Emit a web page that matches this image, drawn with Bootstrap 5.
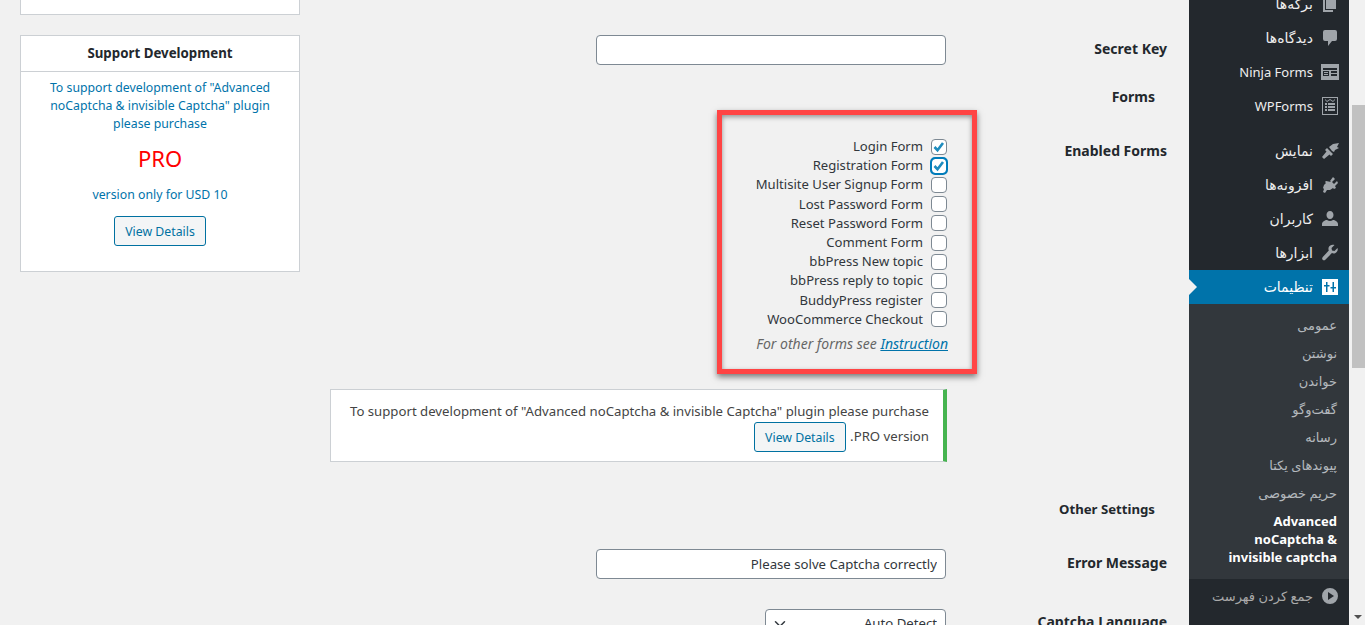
<!DOCTYPE html>
<html lang="fa" dir="rtl">
<head>
    <meta charset="UTF-8">
    <title>Advanced noCaptcha &amp; invisible captcha</title>
    <link href="https://cdn.jsdelivr.net/npm/bootstrap@5.3.3/dist/css/bootstrap.min.css" rel="stylesheet">
    <style>
        body {
            height: 100vh;
            overflow: hidden;
            background: #f1f1f1;
            font-family: "Noto Sans", "DejaVu Sans", sans-serif;
            font-size: 13px;
            color: #444;
        }

        /* fake browser scrollbar */
        .page-scroll { width: 14px; height: 625px; margin-left: 2px; position: relative; }
        .page-scroll-thumb { width: 13px; height: 263px; margin-top: 105px; background: #c1c1c1; }
        .page-scroll-arrow {
            position: absolute; bottom: 6px; right: 3px; width: 0;
            border-left: 4px solid transparent; border-right: 4px solid transparent; border-top: 4px solid #505050;
        }

        /* admin menu */
        .wp-menu { width: 160px; margin-top: -13px; background: #23282d; color: #eee; flex-shrink: 0; height: 640px; }
        .menu-row { height: 34px; padding-right: 9px; gap: 7px; line-height: 1; font-size: 14px; }
        .menu-row .latin-name { font-size: 13px; }
        .menu-row svg { width: 20px; height: 20px; fill: #a0a5aa; flex-shrink: 0; }
        .menu-gap { height: 11px; }
        .menu-row.active { background: #0073aa; color: #fff; position: relative; }
        .menu-row.active svg { fill: #fff; }
        .menu-row.active::after {
            content: ""; position: absolute; left: 0; top: 9px;
            border: 8px solid transparent; border-left-color: #f1f1f1; border-right: 0;
        }
        .sub-menu { background: #32373c; padding: 7px 12px 13px 18px; font-size: 13px; color: #b4b9be; }
        .sub-menu div { height: 28px; line-height: 28px; }
        .sub-menu .current { height: auto; line-height: 18px; color: #fff; font-weight: 700; margin-top: 5px; }
        .menu-collapse { color: #aaa; font-size: 13px; }

        /* left boxes */
        .side-col { width: 280px; margin-left: 20px; margin-right: 30px; flex-shrink: 0; }
        .side-stub { height: 15px; background: #fff; border: 1px solid #ccd0d4; border-top: 0; margin-bottom: 20px; }
        .side-box { background: #fff; border: 1px solid #ccd0d4; height: 237px; color: #0073aa; font-size: 12.3px; line-height: 18px; }
        .side-title { height: 36px; line-height: 35px; border-bottom: 1px solid #ccd0d4; font-weight: 700; color: #23282d; font-size: 13.3px; }
        .side-text { padding: 7px 20px 0; }
        .pro-word { color: #f00; font-size: 22px; line-height: 32px; margin: 9px 0 12px; }
        .wp-btn {
            background: #f3f5f6; border: 1px solid #0071a1; color: #0071a1; border-radius: 3px;
            font-size: 12.3px; line-height: 29px; height: 30px; padding: 0 10px;
        }
        .wp-btn:hover { background: #f1f1f1; color: #016087; border-color: #016087; }
        .side-btn { margin-top: 12px; }

        /* settings table */
        .form-area { width: 837px; margin-right: 22px; flex-shrink: 0; padding-top: 35px; }
        .label-cell { width: 190px; flex-shrink: 0; font-weight: 700; font-size: 14px; color: #23282d; text-align: right; padding-bottom: 3px; }
        .label-top { padding-top: 30px; }
        .label-lang { padding-top: 2px; }
        .field-cell { padding-right: 31px; }
        .key-row { height: 30px; }
        .field-cell .form-control {
            width: 350px; height: 30px; border: 1px solid #7e8993; border-radius: 4px;
            padding: 0 8px; font-size: 13.2px; color: #32373c; box-shadow: none;
        }
        .heading-row { font-weight: 700; font-size: 14px; color: #23282d; padding-right: 12px; margin-top: 21px; height: 24px; }
        .heading-other { margin-top: 36px; padding-top: 2px; height: 30px; font-size: 13.2px; }
        .error-row { margin-top: 21px; }
        .lang-row { margin-top: 30px; }
        .red-box {
            width: 260px; margin-right: -31px; padding: 22px 25px 0 22px; height: 264px;
            border: 5px solid #ff4444;
            box-shadow: 0 3px 6px rgba(0, 0, 0, .5), inset 0 2px 5px rgba(0, 0, 0, .4);
            color: #32373c;
            font-size: 13.1px;
        }
        .form-line { height: 19.2px; line-height: 21px; gap: 8px; white-space: nowrap; }
        .form-line .form-check-input {
            width: 16px; height: 16px; margin: 0; border: 1px solid #7e8993; border-radius: 4px; float: none; flex-shrink: 0;
        }
        .form-line .form-check-input:checked {
            background-color: #fff;
            background-size: 16px;
            background-image: url("data:image/svg+xml,%3Csvg xmlns='http://www.w3.org/2000/svg' viewBox='0 0 16 16'%3E%3Cpath fill='none' stroke='%231e8cbe' stroke-width='2.6' d='M3.500 8l3 3.200 5.500-7.200'/%3E%3C/svg%3E");
        }
        .form-line .form-check-input.is-focus { outline: 2px solid #007cba; outline-offset: -1px; border-color: #007cba; }
        .note-line { font-style: italic; font-size: 14px; line-height: 19px; color: #666; margin: 5px -1px 0 0; white-space: nowrap; }
        .note-line a { color: #0073aa; }
        .notice-box {
            width: 617px; height: 73px; margin: 15px -1px 0 0; background: #fff; border: 1px solid #ccd0d4;
            border-right: 4px solid #46b450; padding: 9px 14px 0 0; line-height: 25px; font-size: 13.2px;
        }
        .notice-box .wp-btn { margin: -3px 1px -3px 0; vertical-align: middle; }
        .lang-select {
            width: 181px; height: 30px; border: 1px solid #7e8993; border-radius: 4px; padding: 0 8px;
            font-size: 13.2px; color: #32373c; background-position: left 6px center; background-size: 16px 12px;
        }
    </style>
</head>
<body>
    <div class="d-flex align-items-start">
        <div class="page-scroll">
            <div class="page-scroll-thumb"></div>
            <div class="page-scroll-arrow"></div>
        </div>

        <div class="wp-menu">
            <div class="menu-row d-flex align-items-center">
                <svg viewBox="0 0 20 20"><path d="M6 15V2h10v13H6zM5 16h8v2H3V5h2v11z"/></svg><span>برگه‌ها</span>
            </div>
            <div class="menu-row d-flex align-items-center">
                <svg viewBox="0 0 20 20"><path d="M5 2h10q2 0 2 2v7q0 2-2 2h-3l-4 5v-5H5q-2 0-2-2V4q0-2 2-2z"/></svg><span>دیدگاه‌ها</span>
            </div>
            <div class="menu-row d-flex align-items-center">
                <svg viewBox="0 0 20 20"><path fill-rule="evenodd" d="M1 2h18v16H1zM3 6v2h14V6zm0 3v5h6V9zm8 0v2h6V9zm0 3v2h6v-2zM4 10h4v1H4zm0 2h4v1H4z"/></svg><span class="latin-name">Ninja Forms</span>
            </div>
            <div class="menu-row d-flex align-items-center">
                <svg viewBox="0 0 20 20"><path fill-rule="evenodd" d="M2 1h16v18H2zm1 1v16h14V2zM5 3l2 2 3-2 3 2 2-2v1l-2 2-3-2-3 2-2-2zM5 7h2v2H5zm3 0h7v2H8zM5 10h2v2H5zm3 0h7v2H8zM5 13h2v2H5zm3 0h7v2H8z"/></svg><span class="latin-name">WPForms</span>
            </div>
            <div class="menu-gap"></div>
            <div class="menu-row d-flex align-items-center">
                <svg viewBox="0 0 20 20"><path d="M9 6l4-3 6-1-2 4 2 1-4 2-1 2-2-1zM7 7l6 6-2 2-1.500-1.500L4 18l-2-2 4.500-5.500L5 9z"/></svg><span>نمایش</span>
            </div>
            <div class="menu-row d-flex align-items-center">
                <svg viewBox="0 0 20 20"><path d="M13 2l2 2-3 3 2 2 3-3 1 2-3 3 1 2-2 1-1-1-3 2H7l-2 3-2-1 1-3-1-1 1-3 2-2-1-1 1-1 5 1-1-1z"/></svg><span>افزونه‌ها</span>
            </div>
            <div class="menu-row d-flex align-items-center">
                <svg viewBox="0 0 20 20"><path d="M10 2c2.200 0 3.500 1.800 3.500 4s-1.300 4-3.500 4-3.500-1.800-3.500-4 1.300-4 3.500-4zM2 17v-2c0-2 3-4 5-4 1 .7 2 1 3 1s2-.3 3-1c2 0 5 2 5 4v2z"/></svg><span>کاربران</span>
            </div>
            <div class="menu-row d-flex align-items-center">
                <svg viewBox="0 0 20 20"><path d="M17.500 5l-3 3-2.500-.5-.5-2.500 3-3c-2.500-.8-5 .2-5.800 2.300-.4 1.100-.3 2.200.1 3.200L3 13.800c-1.200 1.200-1 2.200-.3 2.900s1.700.9 2.900-.3l6.300-6.300c1 .4 2.100.5 3.200.1 2.100-.8 3.200-3.200 2.400-5.200z"/></svg><span>ابزارها</span>
            </div>
            <div class="menu-row active d-flex align-items-center">
                <svg viewBox="0 0 20 20"><path fill-rule="evenodd" d="M2 2h16v16H2zM6 5v3H4v1.500h2V15h1.500V9.500h2V8h-2V5zm6.500 0v5h-2v1.500h2V15H14v-3.500h2V10h-2V5z"/></svg><span>تنظیمات</span>
            </div>
            <div class="sub-menu">
                <div>عمومی</div>
                <div>نوشتن</div>
                <div>خواندن</div>
                <div>گفت‌وگو</div>
                <div>رسانه</div>
                <div>پیوندهای یکتا</div>
                <div>حریم خصوصی</div>
                <div class="current">Advanced noCaptcha &amp; invisible captcha</div>
            </div>
            <div class="menu-row menu-collapse d-flex align-items-center">
                <svg viewBox="0 0 20 20"><path fill-rule="evenodd" d="M10 2a8 8 0 1 1 0 16 8 8 0 0 1 0-16zM8 6v8l6-4z"/></svg><span>جمع کردن فهرست</span>
            </div>
        </div>

        <div class="form-area">
            <div class="key-row d-flex align-items-center">
                <div class="label-cell">Secret Key</div>
                <div class="field-cell"><input type="text" class="form-control" aria-label="Secret Key"></div>
            </div>
            <div class="heading-row">Forms</div>
            <div class="d-flex">
                <div class="label-cell label-top">Enabled Forms</div>
                <div class="field-cell">
                    <div class="red-box">
                        <div class="form-line d-flex align-items-center"><input class="form-check-input" type="checkbox" checked aria-label="Login Form"><span>Login Form</span></div>
                        <div class="form-line d-flex align-items-center"><input class="form-check-input is-focus" type="checkbox" checked aria-label="Registration Form"><span>Registration Form</span></div>
                        <div class="form-line d-flex align-items-center"><input class="form-check-input" type="checkbox" aria-label="Multisite User Signup Form"><span>Multisite User Signup Form</span></div>
                        <div class="form-line d-flex align-items-center"><input class="form-check-input" type="checkbox" aria-label="Lost Password Form"><span>Lost Password Form</span></div>
                        <div class="form-line d-flex align-items-center"><input class="form-check-input" type="checkbox" aria-label="Reset Password Form"><span>Reset Password Form</span></div>
                        <div class="form-line d-flex align-items-center"><input class="form-check-input" type="checkbox" aria-label="Comment Form"><span>Comment Form</span></div>
                        <div class="form-line d-flex align-items-center"><input class="form-check-input" type="checkbox" aria-label="bbPress New topic"><span>bbPress New topic</span></div>
                        <div class="form-line d-flex align-items-center"><input class="form-check-input" type="checkbox" aria-label="bbPress reply to topic"><span>bbPress reply to topic</span></div>
                        <div class="form-line d-flex align-items-center"><input class="form-check-input" type="checkbox" aria-label="BuddyPress register"><span>BuddyPress register</span></div>
                        <div class="form-line d-flex align-items-center"><input class="form-check-input" type="checkbox" aria-label="WooCommerce Checkout"><span>WooCommerce Checkout</span></div>
                        <p class="note-line">For other forms see <a href="#">Instruction</a></p>
                    </div>
                    <div class="notice-box">To support development of "Advanced noCaptcha &amp; invisible Captcha" plugin please purchase PRO version. <button type="button" class="btn wp-btn">View Details</button></div>
                </div>
            </div>
            <div class="heading-row heading-other">Other Settings</div>
            <div class="error-row d-flex align-items-center">
                <div class="label-cell">Error Message</div>
                <div class="field-cell"><input type="text" class="form-control" value="Please solve Captcha correctly" aria-label="Error Message"></div>
            </div>
            <div class="lang-row d-flex">
                <div class="label-cell label-lang">Captcha Language</div>
                <div class="field-cell"><select class="form-select lang-select" aria-label="Captcha Language"><option>Auto Detect</option></select></div>
            </div>
        </div>

        <div class="side-col">
            <div class="side-stub"></div>
            <div class="side-box text-center">
                <div class="side-title">Support Development</div>
                <div class="side-text">To support development of "Advanced noCaptcha &amp; invisible Captcha" plugin please purchase</div>
                <div class="pro-word">PRO</div>
                <div>version only for USD 10</div>
                <button type="button" class="btn wp-btn side-btn">View Details</button>
            </div>
        </div>
    </div>
</body>
</html>
